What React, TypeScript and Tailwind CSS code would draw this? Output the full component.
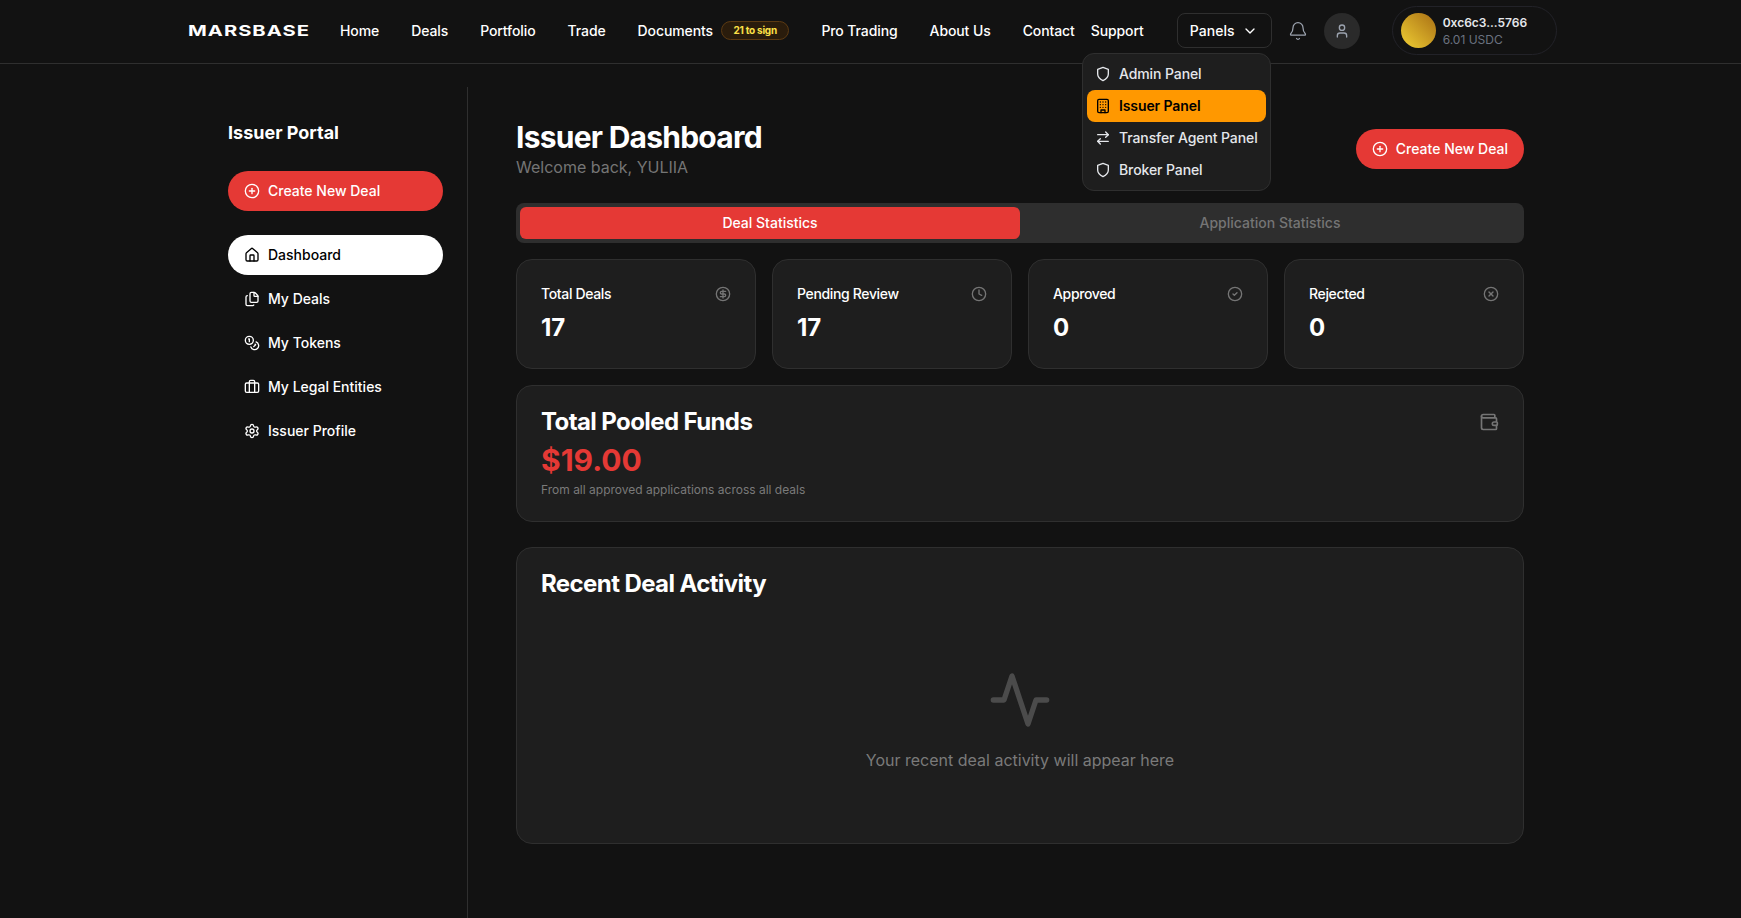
import React from "react";
import {
  ArrowRightLeft, Bell, ChevronDown, CircleCheck, CircleDollarSign, CircleX,
  Clock, Coins, Files, Home, Briefcase, PlusCircle, Settings, User, Wallet,
} from "lucide-react";

const nav = ["Home", "Deals", "Portfolio", "Trade"];
const side = [
  { label: "My Deals", Icon: Files },
  { label: "My Tokens", Icon: Coins },
  { label: "My Legal Entities", Icon: Briefcase },
  { label: "Issuer Profile", Icon: Settings },
];
const stats = [
  { label: "Total Deals", value: "17", Icon: CircleDollarSign },
  { label: "Pending Review", value: "17", Icon: Clock },
  { label: "Approved", value: "0", Icon: CircleCheck },
  { label: "Rejected", value: "0", Icon: CircleX },
];

function Glyph({ className, children }: { className: string; children: React.ReactNode }) {
  return (
    <svg viewBox="0 0 24 24" fill="none" stroke="currentColor" strokeWidth={2} strokeLinecap="round" strokeLinejoin="round" className={className}>
      {children}
    </svg>
  );
}

const ShieldIcon = () => (
  <Glyph className="h-4 w-4 shrink-0"><path d="M12 22s8-4 8-10V5l-8-3-8 3v7c0 6 8 10 8 10z" /></Glyph>
);

const BuildingIcon = () => (
  <Glyph className="h-4 w-4 shrink-0">
    <rect x="4" y="2" width="16" height="20" rx="2" ry="2" />
    <path d="M9 22v-4h6v4M8 6h.01M16 6h.01M12 6h.01M12 10h.01M12 14h.01M16 10h.01M16 14h.01M8 10h.01M8 14h.01" />
  </Glyph>
);

function CreateButton({ className }: { className: string }) {
  return (
    <button className={`flex h-10 items-center gap-2 rounded-full bg-[#e53935] text-sm font-medium text-white ${className}`}>
      <PlusCircle className="h-4 w-4" />
      Create New Deal
    </button>
  );
}

export default function App() {
  return (
    <div className="relative flex min-h-[918px] flex-col bg-[#121212] font-['Inter','Liberation_Sans',sans-serif] text-white">
      <header className="flex h-16 shrink-0 items-center border-b border-[#2f2f2f] pl-[188px] pb-[2px]">
        <span className="mr-[33px] w-[119px] origin-left scale-x-[1.345] text-[15px] leading-none font-bold tracking-[0.05em] whitespace-nowrap">
          MARSBASE
        </span>
        <nav className="flex items-center gap-8 text-sm font-medium tracking-[-0.1px]">
          {nav.map((n) => <a key={n}>{n}</a>)}
          <a className="flex items-center gap-2">
            Documents
            <span className="rounded-full border border-[#5c3a12] bg-[#2a1c0c] px-[11.5px] py-[1px] text-[10px] font-bold tracking-tight text-[#fde047]">21 to sign</span>
          </a>
          <a>Pro Trading</a>
          <a>About Us</a>
          <div className="flex gap-4"><a>Contact</a><a>Support</a></div>
        </nav>
        <button className="ml-[33px] flex h-[35px] w-[95px] items-center justify-center gap-2 rounded-lg border border-[#2f2f2f] text-sm font-medium">
          Panels <ChevronDown className="h-4 w-4" />
        </button>
        <Bell className="ml-[16px] h-5 w-5 text-[#9ca3af]" strokeWidth={1.5} />
        <div className="ml-4 flex h-9 w-9 items-center justify-center rounded-full bg-[#2a2a2a]">
          <User className="h-4 w-4 text-[#9ca3af]" />
        </div>
        <div className="ml-[32px] flex h-[49px] w-[165px] items-center gap-[7px] rounded-full border border-[#222228] pl-[8px]">
          <div className="h-[35px] w-[35px] rounded-full bg-gradient-to-tr from-[#f0d034] to-[#a86f14]" />
          <div className="flex flex-col">
            <span className="text-xs leading-[18px] font-semibold text-[#e5e7eb]">0xc6c3...5766</span>
            <span className="text-xs leading-[16px] text-[#6b7280]">6.01 USDC</span>
          </div>
        </div>
      </header>

      <div className="absolute top-[53px] left-[1082px] z-10 flex w-[189px] flex-col rounded-xl border border-[#2f2f2f] bg-[#1e1e1e] p-[4px] text-sm font-medium tracking-[-0.1px] whitespace-nowrap text-[#e5e7eb]">
        <div className="flex h-8 items-center gap-2 px-[8px]"><ShieldIcon />Admin Panel</div>
        <div className="flex h-8 items-center gap-2 rounded-lg bg-[#ff9800] px-[8px] font-semibold text-black"><BuildingIcon />Issuer Panel</div>
        <div className="flex h-8 items-center gap-2 px-[8px]"><ArrowRightLeft className="h-4 w-4 shrink-0" />Transfer Agent Panel</div>
        <div className="flex h-8 items-center gap-2 px-[8px]"><ShieldIcon />Broker Panel</div>
      </div>

      <div className="flex flex-1 pt-[23px] pl-[228px]">
        <aside className="w-[240px] shrink-0 border-r border-[#2f2f2f] pt-[32px] pr-[24px]">
          <h2 className="text-lg leading-7 font-bold">Issuer Portal</h2>
          <CreateButton className="mt-6 w-full px-4" />
          <ul className="mt-6 flex flex-col gap-1 text-sm font-medium">
            <li className="flex h-10 items-center gap-2 rounded-full bg-white px-4 text-black">
              <Home className="h-4 w-4" />Dashboard
            </li>
            {side.map(({ label, Icon }) => (
              <li key={label} className="flex h-10 items-center gap-2 px-4">
                <Icon className="h-4 w-4" />{label}
              </li>
            ))}
          </ul>
        </aside>

        <main className="w-[1056px] pt-[32px] pl-[48px]">
          <div className="flex items-start justify-between">
            <div>
              <h1 className="text-3xl leading-9 font-bold tracking-tight">Issuer Dashboard</h1>
              <p className="text-base leading-6 text-[#757575]">Welcome back, YULIIA</p>
            </div>
            <CreateButton className="mt-[10px] px-4" />
          </div>

          <div className="mt-[24px] grid h-10 grid-cols-2 rounded-lg bg-[#2e2e2e] p-1 text-sm font-medium">
            <div className="flex items-center justify-center rounded-md bg-[#e53935]">Deal Statistics</div>
            <div className="flex items-center justify-center text-[#757575]">Application Statistics</div>
          </div>

          <div className="mt-4 grid grid-cols-4 gap-4">
            {stats.map(({ label, value, Icon }) => (
              <div key={label} className="h-[110px] rounded-2xl border border-[#2f2f2f] bg-[#1e1e1e] px-6 pt-6">
                <div className="flex items-center justify-between">
                  <span className="text-sm leading-5 font-medium tracking-tight">{label}</span>
                  <Icon className="h-4 w-4 text-[#757575]" />
                </div>
                <div className="mt-[8px] text-2xl leading-8 font-bold">{value}</div>
              </div>
            ))}
          </div>

          <div className="mt-4 flex h-[137px] items-start justify-between rounded-2xl border border-[#2f2f2f] bg-[#1e1e1e] px-6 pt-[20px]">
            <div>
              <h3 className="text-2xl leading-8 font-bold tracking-tight">Total Pooled Funds</h3>
              <div className="mt-[4px] text-3xl leading-9 font-bold text-[#e53935]">$19.00</div>
              <p className="mt-[4px] text-xs leading-4 text-[#7a7a7a]">From all approved applications across all deals</p>
            </div>
            <Wallet className="mt-[6px] h-5 w-5 text-[#757575]" />
          </div>

          <div className="mt-[25px] flex h-[297px] flex-col rounded-2xl border border-[#2f2f2f] bg-[#1e1e1e] px-6 pt-[20px]">
            <h3 className="text-2xl leading-8 font-bold tracking-tight">Recent Deal Activity</h3>
            <div className="mt-[68px] flex flex-col items-center">
              <Glyph className="h-16 w-16 text-[#4b4b4b]"><path d="M22 12h-4l-3 9L9 3l-3 9H2" /></Glyph>
              <p className="mt-[16px] text-base leading-6 text-[#7a7a7a]">Your recent deal activity will appear here</p>
            </div>
          </div>
        </main>
      </div>
    </div>
  );
}
